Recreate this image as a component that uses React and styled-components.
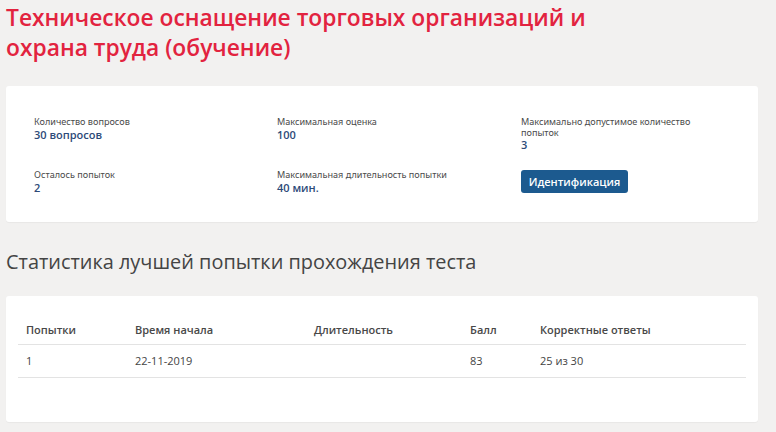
import React from "react";
import styled, { createGlobalStyle } from "styled-components";

const Global = createGlobalStyle`
  html, body { margin: 0; padding: 0; background: #f2f1f0; }
  body { font-family: "Open Sans", "Liberation Sans", sans-serif; }
`;

const Page = styled.div`
  width: 752px;
  padding: 3px 0 10px 6px;
`;

const Title = styled.h1`
  margin: 0;
  font-family: "Open Sans", sans-serif;
  font-weight: 600;
  font-size: 22.8px;
  line-height: 30px;
  color: #e2233f;
  width: 620px;
`;

const Card = styled.section`
  background: #fff;
  border-radius: 3px;
  box-shadow: 0 1px 1px rgba(0,0,0,0.04);
`;

const InfoCard = styled(Card)`
  margin-top: 23px;
  padding: 31px 28px 28px;
  display: grid;
  grid-template-columns: 243px 244px 1fr;
  row-gap: 19px;
`;

const Field = styled.div`
  display: flex;
  flex-direction: column;
`;

const Label = styled.div`
  font-family: "Noto Sans", sans-serif;
  font-size: 9.1px;
  line-height: 10.5px;
  color: #4a4a4a;
  max-width: 180px;
`;

const Value = styled.div`
  font-size: 11px;
  line-height: 13px;
  font-weight: 600;
  color: #2d4a78;
`;

const Button = styled.button`
  align-self: flex-start;
  width: 107px;
  height: 23px;
  border: none;
  border-radius: 3px;
  background: #1c5a8f;
  color: #fff;
  font-family: "Open Sans", sans-serif;
  font-weight: 600;
  font-size: 11px;
  padding: 0;
`;

const Heading = styled.h2`
  margin: 28px 0 0;
  font-weight: 400;
  font-size: 19.9px;
  line-height: 24px;
  color: #444;
`;

const TableCard = styled(Card)`
  margin-top: 22px;
  padding: 18px 12px 44px;
`;

const Table = styled.table`
  width: 100%;
  table-layout: fixed;
  border-collapse: collapse;
  font-size: 11px;
  line-height: 16px;
`;

const Th = styled.th`
  box-sizing: border-box;
  text-align: left;
  font-weight: 600;
  color: #484848;
  padding: 8px 8px 6px;
  border-bottom: 1px solid #e3e3e3;
  width: ${(p) => p.$w || "auto"};
`;

const Td = styled.td`
  color: #444;
  padding: 8px 8px 8px;
  border-bottom: 1px solid #e3e3e3;
`;

const fields = [
  { label: "Количество вопросов", value: "30 вопросов" },
  { label: "Максимальная оценка", value: "100" },
  { label: "Максимально допустимое количество попыток", value: "3" },
  { label: "Осталось попыток", value: "2" },
  { label: "Максимальная длительность попытки", value: "40 мин." },
];

const cols = [
  { t: "Попытки", w: "109px" },
  { t: "Время начала", w: "179px" },
  { t: "Длительность", w: "156px" },
  { t: "Балл", w: "70px" },
  { t: "Корректные ответы" },
];

const row = ["1", "22-11-2019", "", "83", "25 из 30"];

export default function App() {
  return (
    <>
      <Global />
      <Page>
        <Title>Техническое оснащение торговых организаций и охрана труда (обучение)</Title>
        <InfoCard>
          {fields.map((f) => (
            <Field key={f.label}>
              <Label>{f.label}</Label>
              <Value>{f.value}</Value>
            </Field>
          ))}
          <Button>Идентификация</Button>
        </InfoCard>
        <Heading>Статистика лучшей попытки прохождения теста</Heading>
        <TableCard>
          <Table>
            <thead>
              <tr>
                {cols.map((c) => (
                  <Th key={c.t} $w={c.w}>{c.t}</Th>
                ))}
              </tr>
            </thead>
            <tbody>
              <tr>
                {row.map((v, i) => (
                  <Td key={i}>{v}</Td>
                ))}
              </tr>
            </tbody>
          </Table>
        </TableCard>
      </Page>
    </>
  );
}
